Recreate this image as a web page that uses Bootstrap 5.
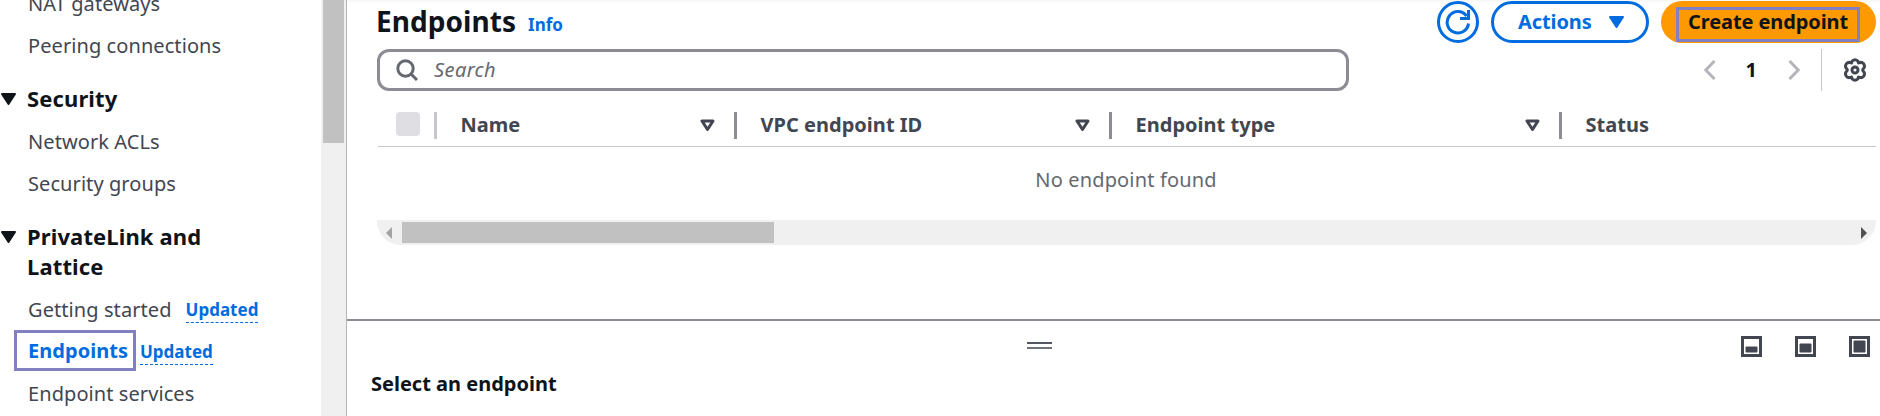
<!DOCTYPE html>
<html lang="en">
<head>
<meta charset="utf-8">
<title>Endpoints</title>
<link href="https://cdn.jsdelivr.net/npm/bootstrap@5.3.0/dist/css/bootstrap.min.css" rel="stylesheet">
<style>
body{font-family:"Noto Sans","Open Sans",sans-serif;font-size:20px;color:#0f141a;width:1880px;height:416px;overflow:hidden;background:#fff}
svg{display:block;flex:none}
.sidenav{width:321px;margin-top:-18px}
.nav-item-row{height:42px;padding-left:28px;color:#424650;line-height:43px;white-space:nowrap;letter-spacing:.08px}
.nav-head{font-size:22px;font-weight:700;line-height:30px;letter-spacing:.12px;padding-left:1px;margin:17px 0 7px}
.nav-head svg{margin:10px 11px 0 0}
.t-link{color:#006ce0;font-weight:700}
.upd{font-size:17px;line-height:24px;border-bottom:1px dashed #006ce0;margin-top:2px;letter-spacing:0}
.marked{border:3px solid #8280bf;height:41px;width:122px;margin:-1px 0 0 -14px;padding-left:11px;line-height:36px;letter-spacing:.05px}
.vscroll{width:25px;background:#f0f0f0;padding:0 2px}
.vthumb{height:143px;background:#c1c1c1}
.content{border-left:1px solid #b4b4bb}
.head-bar{height:43px;padding:1px 4px 0 29px;background:linear-gradient(#f6f6f7,#fff 3px)}
.title{font-size:28px;font-weight:700;line-height:41px;letter-spacing:.05px}
.info{font-size:17px;line-height:42px;margin-left:12px;padding-top:3px}
.pill{height:42px;border-radius:21px;border:3px solid #006ce0;color:#006ce0;font-weight:700;font-size:20px;line-height:34px;padding:0;letter-spacing:-.1px}
.pill-round{width:42px}
.pill-act{width:158px;padding-left:24px;margin:0 12px}
.pill-act svg{margin-left:17px}
.pill-create{width:215px;background:#ff9900;border:0;color:#0f141a;padding:4px 0 0 15px}
.create-mark{width:184px;height:35px;border:3px solid #8280bf;line-height:24px;padding-left:9px}
.tools{padding:6px 4px 0 30px;height:48px}
.search{width:972px;height:42px;border:3px solid #8c8c94;border-radius:12px;padding-left:16px;color:#656871}
.search i{margin-left:15px;letter-spacing:.4px}
.page-now{margin:0 31px 0 30px}
.pager-line{width:1px;height:42px;background:#c6c6cd;margin:0 21px 0 21px}
.thead-row{height:56px;margin:0 4px 0 31px;border-bottom:1px solid #c6c6cd;font-weight:700;letter-spacing:.02px;color:#424650;padding-top:13px}
.chk{width:24px;height:24px;border-radius:4px;background:#dedee3;margin:0 14px 2px 18px}
.vsep{width:3px;height:27px;background:#8c8c94}
.th-cell{padding:0 19px 0 23.5px}
.empty{height:73px;line-height:65px;text-align:center;color:#656871;margin:0 6px 0 31px;letter-spacing:.15px}
.hscroll{height:24.5px;margin:0 4px 0 30px;background:#f0f0f0;border-radius:0 0 24px 24px;padding:2px 9px 1.5px}
.hthumb{width:372px;margin-left:10px;background:#c1c1c1}
.split{margin-top:74.5px;border-top:2px solid #8c8c94;height:97px}
.split-bar{height:48px}
.split-title{font-weight:700;margin-left:24px;line-height:30px}
.grip{left:680px;top:21px;width:25px;height:7px;border-top:2px solid #555863;border-bottom:2px solid #6f727c}
.panel-icons{gap:33px;padding:15px 10px 0 0}
</style>
</head>
<body class="d-flex">
<nav class="sidenav flex-shrink-0">
  <div class="nav-item-row">NAT gateways</div>
  <div class="nav-item-row">Peering connections</div>
  <div class="nav-head d-flex"><svg width="15" height="12"><path d="M1 1H14L7.5 11Z" fill="#0f141a" stroke="#0f141a" stroke-width="2" stroke-linejoin="round"/></svg><span>Security</span></div>
  <div class="nav-item-row">Network ACLs</div>
  <div class="nav-item-row">Security groups</div>
  <div class="nav-head d-flex"><svg width="15" height="12"><path d="M1 1H14L7.5 11Z" fill="#0f141a" stroke="#0f141a" stroke-width="2" stroke-linejoin="round"/></svg><div>PrivateLink and<br>Lattice</div></div>
  <div class="nav-item-row d-flex align-items-center"><span>Getting started</span><span class="upd t-link" style="margin-left:14px">Updated</span></div>
  <div class="nav-item-row d-flex align-items-center"><span class="marked t-link">Endpoints</span><span class="upd t-link" style="margin-left:4px">Updated</span></div>
  <div class="nav-item-row">Endpoint services</div>
</nav>
<div class="vscroll flex-shrink-0"><div class="vthumb"></div></div>
<main class="content flex-grow-1">
  <div class="head-bar d-flex">
    <span class="title">Endpoints</span><span class="info t-link">Info</span>
    <div class="d-flex ms-auto">
      <button class="btn pill pill-round d-flex align-items-center justify-content-center" aria-label="Refresh"><svg width="26" height="26" viewBox="0 0 26 26" fill="none" stroke="#006ce0" stroke-width="3"><path d="M23.5 14.5A10.7 10.7 0 1 1 21.5 7M23.5 1V9.500H15"/></svg></button>
      <button class="btn pill pill-act d-flex align-items-center"><span>Actions</span><svg width="15" height="12"><path d="M1 1H14L7.500 11Z" fill="#006ce0" stroke="#006ce0" stroke-width="2" stroke-linejoin="round"/></svg></button>
      <button class="btn pill pill-create text-start"><div class="create-mark">Create endpoint</div></button>
    </div>
  </div>
  <div class="tools d-flex align-items-center">
    <div class="search d-flex align-items-center"><svg width="23" height="22" fill="none" stroke="#656871" stroke-width="3"><circle cx="9.500" cy="9.500" r="7.700"/><path d="M14.800 14.800L21 21"/></svg><i>Search</i></div>
    <div class="d-flex align-items-center ms-auto">
      <svg width="12" height="20" fill="none" stroke="#b4b4bb" stroke-width="3"><path d="M10.500 1L1.800 10L10.500 19"/></svg>
      <b class="page-now">1</b>
      <svg width="12" height="20" fill="none" stroke="#b4b4bb" stroke-width="3"><path d="M1.500 1L10.200 10L1.500 19"/></svg>
      <span class="pager-line"></span>
      <svg style="margin-right:9px" width="24" height="24" viewBox="0 0 24 24" fill="none" stroke="#424650" stroke-width="3"><path d="M9.200 3Q12 .5 14.800 3L15.500 5Q18.500 3.500 20.500 5.500Q22.500 8.500 20.500 10.500Q19 12 20.500 13.500Q22.500 15.500 20.500 18.500Q18.500 20.500 15.500 19L14.800 21Q12 23.500 9.200 21L8.500 19Q5.500 20.500 3.500 18.500Q1.500 15.500 3.500 13.500Q5 12 3.500 10.500Q1.500 8.500 3.500 5.500Q5.500 3.500 8.500 5Z" stroke-linejoin="round"/><circle cx="12" cy="12" r="3"/></svg>
    </div>
  </div>
  <div class="thead-row d-flex align-items-center">
    <span class="chk"></span><span class="vsep" style="background:#c6c6cd"></span>
    <div class="th-cell d-flex align-items-center justify-content-between" style="width:297px"><span>Name</span><svg width="15" height="13"><path d="M2 2H13L7.500 10.500Z" fill="none" stroke="#424650" stroke-width="3" stroke-linejoin="round"/></svg></div><span class="vsep"></span>
    <div class="th-cell d-flex align-items-center justify-content-between" style="width:372px"><span>VPC endpoint ID</span><svg width="15" height="13"><path d="M2 2H13L7.500 10.500Z" fill="none" stroke="#424650" stroke-width="3" stroke-linejoin="round"/></svg></div><span class="vsep"></span>
    <div class="th-cell d-flex align-items-center justify-content-between" style="width:447px"><span>Endpoint type</span><svg width="15" height="13"><path d="M2 2H13L7.500 10.500Z" fill="none" stroke="#424650" stroke-width="3" stroke-linejoin="round"/></svg></div><span class="vsep"></span>
    <div class="th-cell">Status</div>
  </div>
  <div class="empty">No endpoint found</div>
  <div class="hscroll d-flex align-items-stretch">
    <svg class="align-self-center" width="6" height="12"><path d="M6 0V12L0 6Z" fill="#a3a3a3"/></svg><span class="hthumb"></span>
    <svg class="align-self-center ms-auto" width="6" height="12"><path d="M0 0V12L6 6Z" fill="#505050"/></svg>
  </div>
  <section class="split">
    <div class="split-bar position-relative">
      <div class="grip position-absolute"></div>
      <div class="panel-icons d-flex justify-content-end">
        <svg width="21" height="21"><rect x="1.500" y="1.500" width="18" height="18" fill="none" stroke="#424650" stroke-width="3"/><rect x="4.500" y="10.500" width="12" height="6" rx="1" fill="#424650"/></svg>
        <svg width="21" height="21"><rect x="1.500" y="1.500" width="18" height="18" fill="none" stroke="#424650" stroke-width="3"/><rect x="4.500" y="7.500" width="12" height="9" rx="1" fill="#424650"/></svg>
        <svg width="21" height="21"><rect x="1.500" y="1.500" width="18" height="18" fill="none" stroke="#424650" stroke-width="3"/><rect x="4.500" y="4.500" width="12" height="12" rx="1" fill="#424650"/></svg>
      </div>
    </div>
    <div class="split-title">Select an endpoint</div>
  </section>
</main>
<script src="https://cdn.jsdelivr.net/npm/bootstrap@5.3.0/dist/js/bootstrap.bundle.min.js"></script>
</body>
</html>
